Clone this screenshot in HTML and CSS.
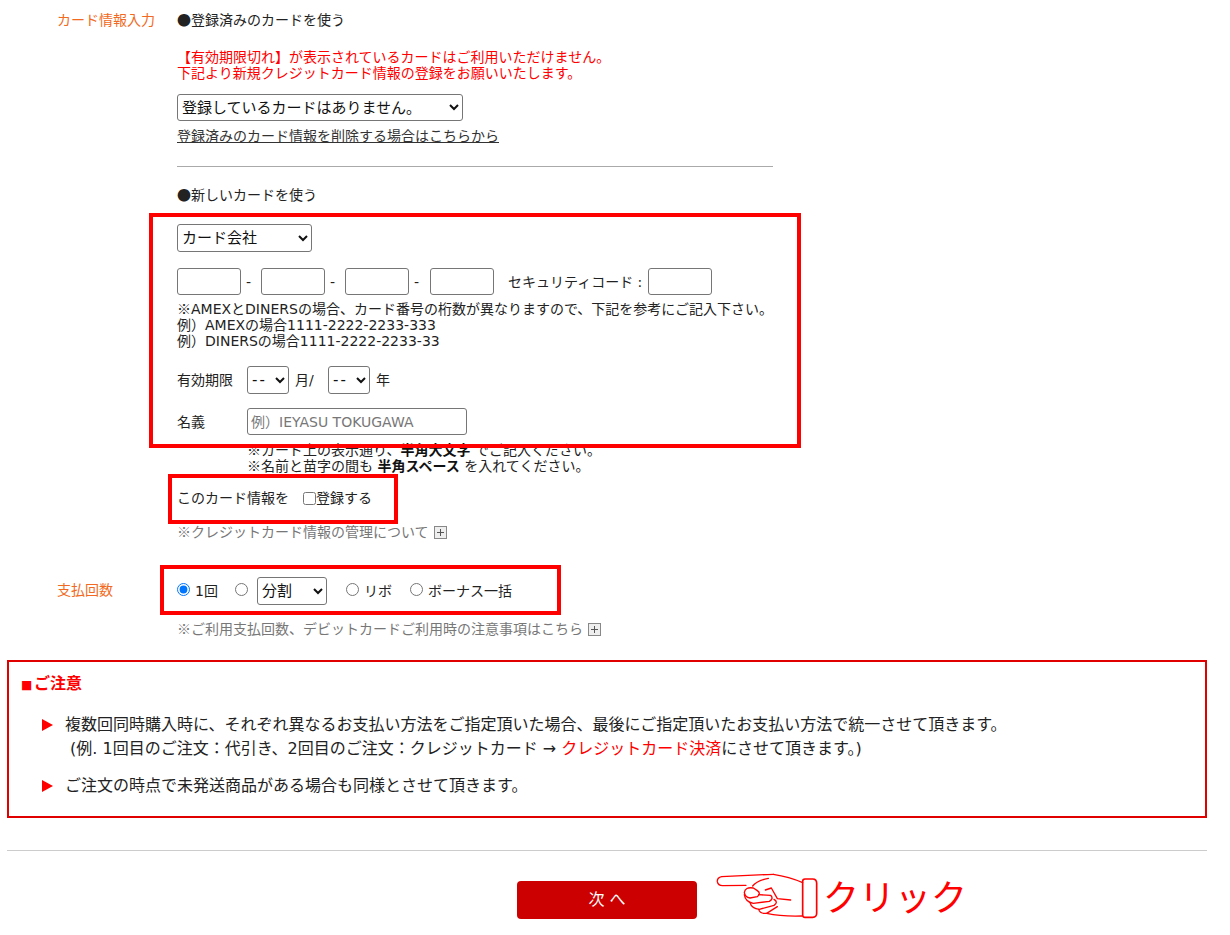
FILE: index.html
```html
<!DOCTYPE html>
<html lang="ja">
<head>
<meta charset="utf-8">
<title>カード情報入力</title>
<link rel="stylesheet" href="styles.css">
</head>
<body>
<div class="page">
  <div class="form-row card-row">
    <div class="label">カード情報入力</div>
    <div class="body">
      <div class="line"><span class="cj">●</span>登録済みのカードを使う</div>
      <div class="warn">【有効期限切れ】が表示されているカードはご利用いただけません。<br>下記より新規クレジットカード情報の登録をお願いいたします。</div>
      <select class="sel sel-saved"><option>登録しているカードはありません。</option></select>
      <div class="line link-line"><a href="#" class="link">登録済みのカード情報を削除する場合はこちらから</a></div>
      <hr class="rule">
      <div class="line"><span class="cj">●</span>新しいカードを使う</div>
      <select class="sel sel-company"><option>カード会社</option></select>
      <div class="num-row">
        <input class="inp num" type="text"><span class="dash">-</span>
        <input class="inp num" type="text"><span class="dash">-</span>
        <input class="inp num" type="text"><span class="dash">-</span>
        <input class="inp num" type="text">
        <span class="sec-label">セキュリティコード :</span>
        <input class="inp num" type="text">
      </div>
      <div class="notes"><span class="cj">※</span>AMEXとDINERSの場合、カード番号の桁数が異なりますので、下記を参考にご記入下さい。<br>例）AMEXの場合1111-2222-2233-333<br>例）DINERSの場合1111-2222-2233-33</div>
      <div class="exp-row">
        <span class="field-name">有効期限</span>
        <select class="sel sel-exp"><option>--</option></select>
        <span class="unit">月/</span>
        <select class="sel sel-exp"><option>--</option></select>
        <span class="unit">年</span>
      </div>
      <div class="name-row">
        <span class="field-name">名義</span>
        <input class="inp name" type="text" placeholder="例）IEYASU TOKUGAWA">
      </div>
      <div class="name-notes"><span class="cj">※</span>カード上の表示通り、<b>半角大文字</b> でご記入ください。<br><span class="cj">※</span>名前と苗字の間も <b>半角スペース</b> を入れてください。</div>
      <div class="save-row">
        <span>このカード情報を</span>
        <label class="save-label"><input class="check" type="checkbox">登録する</label>
      </div>
      <div class="gray-note"><span><span class="cj">※</span>クレジットカード情報の管理について</span> <span class="plus"></span></div>
    </div>
  </div>

  <div class="form-row pay-row">
    <div class="label pay-label">支払回数</div>
    <div class="body">
      <div class="pay-options">
        <label class="opt opt-one"><input class="radio" type="radio" name="pay" checked>1回</label>
        <label class="opt opt-split"><input class="radio" type="radio" name="pay"><select class="sel sel-split"><option>分割</option></select></label>
        <label class="opt opt-rev"><input class="radio" type="radio" name="pay">リボ</label>
        <label class="opt"><input class="radio" type="radio" name="pay">ボーナス一括</label>
      </div>
      <div class="gray-note pay-note"><span><span class="cj">※</span>ご利用支払回数、デビットカードご利用時の注意事項はこちら</span> <span class="plus"></span></div>
    </div>
  </div>

  <section class="notice">
    <h3 class="notice-title"><span class="square">■</span>ご注意</h3>
    <div class="notice-item first"><span class="arrow"></span><p>複数回同時購入時に、それぞれ異なるお支払い方法をご指定頂いた場合、最後にご指定頂いたお支払い方法で統一させて頂きます。<br>&nbsp;(例. 1回目のご注文：代引き、2回目のご注文：クレジットカード → <span class="red">クレジットカード決済</span>にさせて頂きます。)</p></div>
    <div class="notice-item"><span class="arrow"></span><p>ご注文の時点で未発送商品がある場合も同様とさせて頂きます。</p></div>
  </section>

  <hr class="foot-rule">

  <div class="actions">
    <button class="next" type="button">次 へ</button>
    <svg class="hand" viewBox="45 36 315 141" width="105" height="47" aria-hidden="true">
      <g fill="none" stroke="#f00" stroke-width="4" stroke-linecap="round" stroke-linejoin="round">
        <path d="M220 43 Q140 46 65 50 Q51 53 52 65 Q54 77 68 77 L138 76"/>
        <path d="M220 43 Q268 50 308 68"/>
        <path d="M158 78 Q170 62 205 55"/>
        <path d="M160 84 Q135 80 133 98 Q135 112 150 114 L172 110 Q184 100 172 92 Z"/>
        <path d="M133 104 Q136 126 160 130 L208 124 Q222 116 212 106 L176 104"/>
        <path d="M150 128 Q155 146 178 148 L222 136 Q236 126 222 118"/>
        <path d="M176 148 Q180 162 200 160 L232 140"/>
        <path d="M196 90 L214 84 L232 116 L272 120"/>
        <path d="M200 160 Q245 170 306 168"/>
        <path d="M315 57 H338 Q350 57 350 70 V160 Q350 172 338 172 H315 Q308 172 308 165 V64 Q308 57 315 57 Z" stroke-width="5"/>
      </g>
    </svg>
    <span class="click">クリック</span>
  </div>
</div>

<div class="mark mark-card"></div>
<div class="mark mark-save"></div>
<div class="mark mark-pay"></div>
</body>
</html>
```
FILE: styles.css
```css
* { box-sizing: border-box; }
html, body { margin: 0; padding: 0; background: #fff; }
body {
  position: relative;
  height: 935px;
  overflow: hidden;
  font-family: "DejaVu Sans", "Noto Sans CJK JP", sans-serif;
  font-size: 14px;
  line-height: 16px;
  color: #222;
}
.cj { font-family: "Noto Sans CJK JP", sans-serif; line-height: 0; }
.page { width: 1214px; padding: 12px 7px 0; }
.form-row { display: grid; grid-template-columns: 120px 1fr; padding-left: 50px; }
.label { color: #f26a21; font-size: 14px; line-height: 16px; }
.pay-label { padding-top: 5px; }
.line { line-height: 16px; }
.warn { color: #f00; margin-top: 21px; }
.sel {
  font: inherit;
  font-size: 15px;
  color: #111;
  background: #fff;
  border: 1px solid #767676;
  border-radius: 3px;
  padding: 0;
  display: block;
}
.sel-saved { width: 286px; height: 27px; margin-top: 13px; }
.link-line { margin-top: 7px; }
.link { color: #333; text-decoration: underline; }
.rule { width: 596px; height: 1px; margin: 22px 0 20px; border: 0; background: #aaa; }
.sel-company { width: 135px; height: 28px; margin-top: 21px; }
.num-row { display: flex; align-items: center; margin-top: 16px; height: 27px; }
.inp {
  font: inherit;
  border: 1px solid #767676;
  border-radius: 3px;
  background: #fff;
  padding: 1px 3px;
  margin: 0;
}
.num { width: 64px; height: 27px; }
.dash { width: 20px; padding-left: 5px; }
.dash:nth-of-type(3) { width: 21px; }
.sec-label { margin-left: 14px; width: 140px; white-space: nowrap; }
.notes { margin-top: 6px; white-space: nowrap; }
.exp-row { display: flex; align-items: center; margin-top: 17px; height: 28px; }
.field-name { width: 70px; }
.sel-exp { width: 42px; height: 28px; letter-spacing: 2px; }
.unit { margin: 0 13px 0 6px; width: 20px; white-space: nowrap; }
.name-row { display: flex; align-items: center; margin-top: 14px; height: 27px; }
.name { width: 220px; height: 27px; }
.name::placeholder { color: #777; opacity: 1; }
.name-notes { margin: 7px 0 0 70px; }
.name-notes b { font-weight: 700; color: #111; }
.save-row { display: flex; align-items: center; height: 16px; margin-top: 16px; }
.save-label { display: flex; align-items: center; margin-left: 14px; }
.check { width: 13px; height: 13px; margin: 0; }
.gray-note { color: #777; margin-top: 18px; display: flex; align-items: center; gap: 5px; }
.plus {
  display: inline-block;
  width: 13px;
  height: 13px;
  border: 1px solid #888;
  background: linear-gradient(#555, #555) center / 7px 1px no-repeat, linear-gradient(#555, #555) center / 1px 7px no-repeat, #eee;
}
.pay-row { margin-top: 37px; }
.pay-options { display: flex; align-items: center; height: 28px; }
.opt { display: flex; align-items: center; }
.radio { width: 13px; height: 13px; margin: 0 5px 4px 0; }
.opt-one { margin-right: 17px; }
.opt-split { margin-right: 19px; }
.opt-split .radio { margin-right: 9px; }
.sel-split { width: 70px; height: 28px; margin-left: 0; }
.opt-rev { margin-right: 18px; }
.pay-note { margin-top: 16px; }
.notice {
  width: 1200px;
  height: 158px;
  margin-top: 23px;
  padding: 14px 12px;
  border: 2px solid #e00000;
}
.notice-title { margin: 0; font-size: 16px; line-height: 16px; font-weight: 700; color: #f00; }
.square { display: inline-block; width: 13px; font-size: 12px; }
.notice-item { display: flex; margin-top: 13px; font-size: 16px; line-height: 24px; }
.notice-item.first { margin-top: 20px; }
.notice-item p { margin: 0; }
.arrow {
  width: 0;
  height: 0;
  margin: 6px 12px 0 21px;
  border-style: solid;
  border-width: 6px 0 6px 11px;
  border-color: transparent transparent transparent #f00;
  flex: none;
}
.red { color: #f00; }
.foot-rule { width: 1200px; height: 1px; margin: 32px 0 0; border: 0; background: #ccc; }
.actions { display: flex; align-items: flex-start; margin: 30px 0 0 510px; }
.next {
  width: 180px;
  height: 38px;
  border: 0;
  border-radius: 4px;
  background: #cc0000;
  color: #fff;
  font: inherit;
  font-size: 16px;
}
.hand { margin: -9px 0 0 18px; flex: none; }
.click { margin: -9px 0 0 3px; font-family: "Noto Sans CJK JP", sans-serif; font-size: 36px; line-height: 46px; color: #f00; white-space: nowrap; }
.mark { position: absolute; border: 4px solid #f00; }
.mark-card { left: 149px; top: 213px; width: 652px; height: 235px; }
.mark-save { left: 168px; top: 474px; width: 230px; height: 50px; }
.mark-pay { left: 160px; top: 565px; width: 401px; height: 50px; }
```
